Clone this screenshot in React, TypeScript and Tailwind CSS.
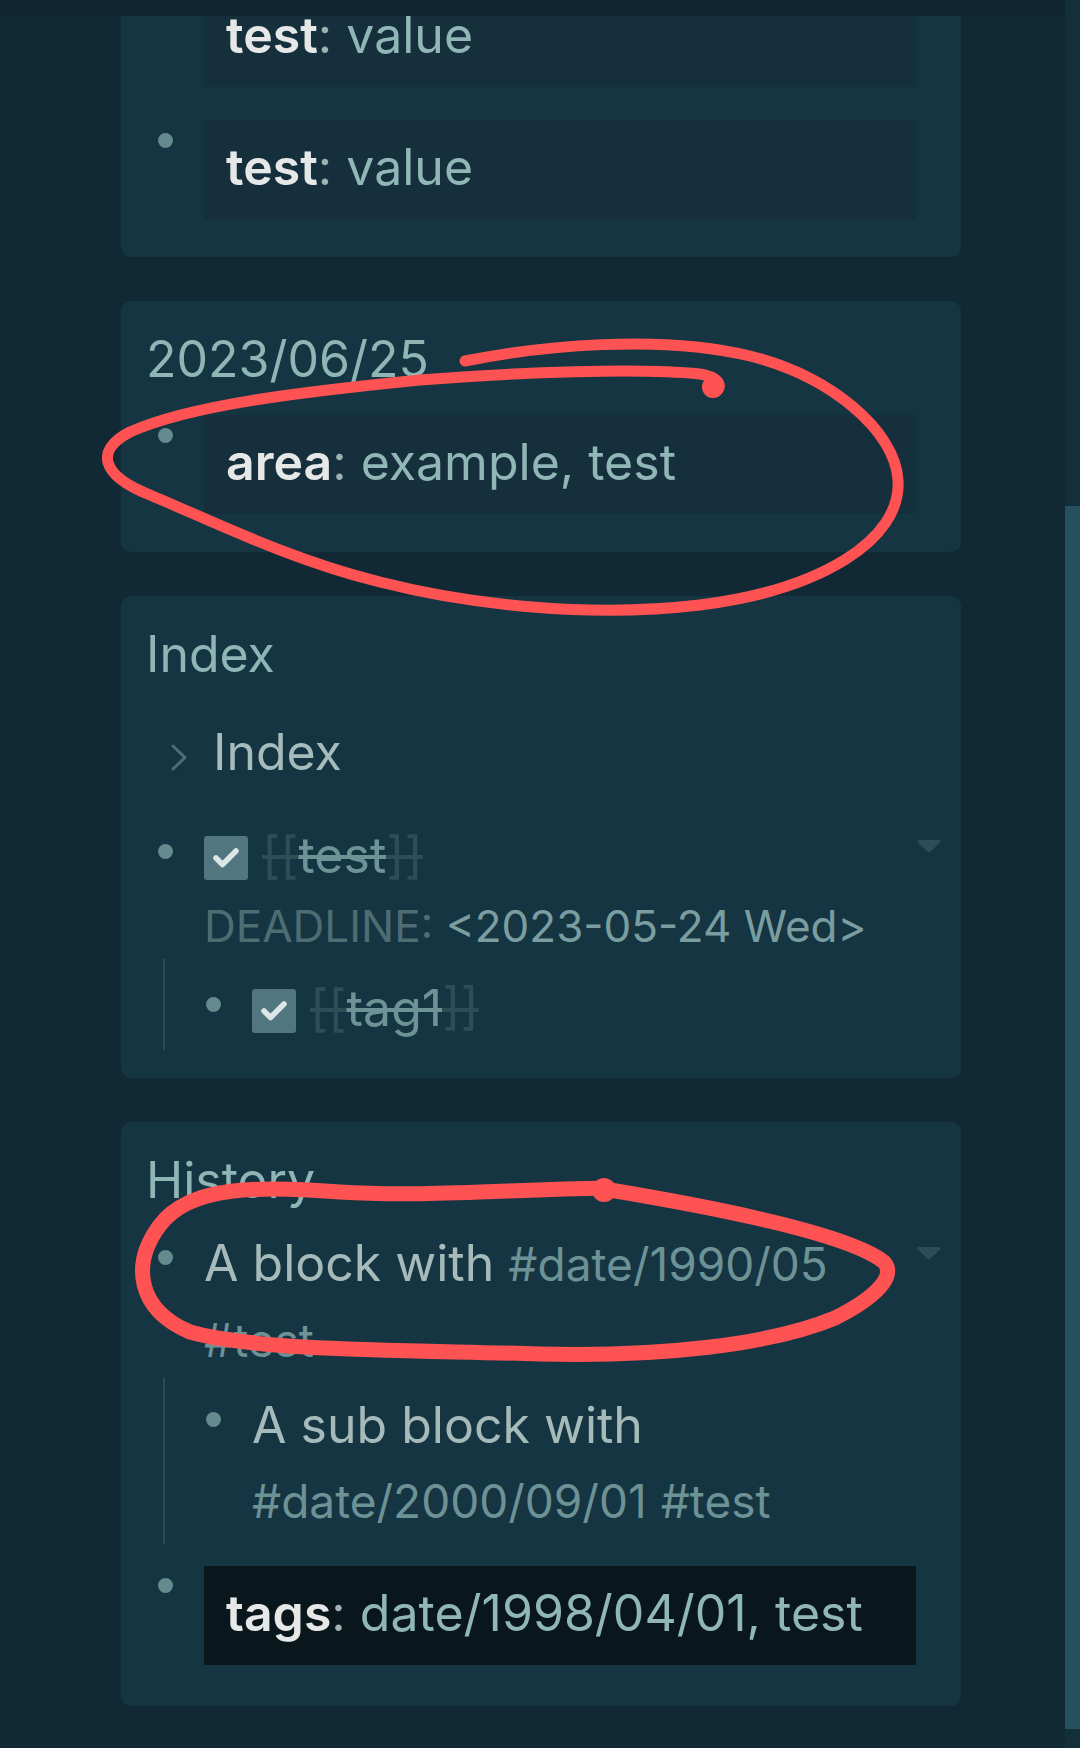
import React from 'react';

const Bullet = ({ className }: { className: string }) => (
  <div className={`w-[58px] shrink-0 pl-[12px] ${className}`}>
    <div className="h-[15px] w-[15px] rounded-full bg-[#668b8e]" />
  </div>
);

const Caret = () => (
  <svg width="26" height="14" viewBox="0 0 26 14">
    <path d="M3 2.5 H23 L13 12 Z" fill="#2d4d58" stroke="#2d4d58" strokeWidth="3" strokeLinejoin="round" />
  </svg>
);

const Checkbox = () => (
  <div className="mt-[18px] h-[44px] w-[44px] shrink-0 rounded-[3px] bg-[#52767f]">
    <svg width="44" height="44" viewBox="0 0 44 44">
      <path d="M12 22 L18.5 28.5 L32 15" fill="none" stroke="#dce6e6" strokeWidth="5.5" strokeLinecap="round" strokeLinejoin="round" />
    </svg>
  </div>
);

const DoneLink = ({ label }: { label: string }) => (
  <span className="ml-[14px] whitespace-nowrap text-[50px] leading-[75px]">
    <span className="text-[#2e4d57] line-through decoration-4">[[</span>
    <span className="text-[#6e9397] line-through decoration-4">{label}</span>
    <span className="text-[#2e4d57] line-through decoration-4">]]</span>
  </span>
);

const Property = ({ name, value, dark }: { name: string; value: string; dark?: boolean }) => (
  <div
    className={`flex-1 pl-[22px] pt-[10px] pb-[14px] text-[50px] leading-[75px] ${
      dark ? 'bg-[#09171d]' : 'bg-[#162f3c]'
    }`}
  >
    <span className="font-semibold text-[#e6e8e8]">{name}</span>
    <span className="text-[#9fb2b2]">: </span>
    <span className="text-[#90b6b6]">{value}</span>
  </div>
);

const Tag = ({ children }: { children: React.ReactNode }) => (
  <span className="text-[46px] text-[#6d9295]">{children}</span>
);

export default function App() {
  return (
    <div className="relative flex h-[1748px] w-[1080px] overflow-hidden bg-[#102935] font-['Inter',sans-serif]">
      <div className="flex flex-1 flex-col">
        <div className="h-[16px] shrink-0 bg-[#10252f]" />

        <div className="flex-1 overflow-hidden">
          <div className="-mt-[28px] flex flex-col gap-[44px] pl-[121px]">
            {/* properties card, top cut off by the header */}
            <div className="w-[840px] rounded-b-[10px] bg-[#153542] pb-[38px] pl-[25px] pr-[20px]">
              <div className="flex">
                <Bullet className="pt-[13px]" />
                <Property name="test" value="value" />
                <div className="w-[25px] shrink-0" />
              </div>
              <div className="mt-[33px] flex">
                <Bullet className="pt-[13px]" />
                <Property name="test" value="value" />
                <div className="w-[25px] shrink-0" />
              </div>
            </div>

            {/* journal day */}
            <div className="w-[840px] rounded-[10px] bg-[#153542] pt-[21px] pb-[38px] pl-[25px] pr-[20px]">
              <div className="text-[50px] leading-[75px] text-[#8fb6b5]">2023/06/25</div>
              <div className="mt-[18px] flex">
                <Bullet className="pt-[13px]" />
                <Property name="area" value="example, test" />
                <div className="w-[25px] shrink-0" />
              </div>
            </div>

            {/* index */}
            <div className="w-[840px] rounded-[10px] bg-[#153542] pt-[21px] pb-[28px] pl-[25px] pr-[20px]">
              <div className="text-[50px] leading-[75px] text-[#8fb6b5]">Index</div>
              <div className="mt-[23px] flex h-[75px] items-center pl-[24px]">
                <svg width="18" height="29" viewBox="0 0 18 29" className="mt-[10px] shrink-0">
                  <path d="M3 3 L15 14.5 L3 26" fill="none" stroke="#4d6e74" strokeWidth="3" strokeLinecap="round" strokeLinejoin="round" />
                </svg>
                <span className="ml-[25px] text-[50px] leading-[75px] text-[#a6bbbb]">Index</span>
              </div>

              <div className="mt-[28px] flex">
                <Bullet className="pt-[26px]" />
                <div className="flex-1">
                  <div className="flex">
                    <Checkbox />
                    <DoneLink label="test" />
                  </div>
                  <div className="text-[44px] leading-[66px]">
                    <span className="text-[#4e6d73]">DEADLINE:</span>{' '}
                    <span className="text-[#7a9ea0]">&lt;2023-05-24 Wed&gt;</span>
                  </div>
                </div>
                <div className="w-[25px] shrink-0 pt-[21px]">
                  <Caret />
                </div>
              </div>

              <div className="ml-[17px] border-l-2 border-[#2b4b56] pl-[29px] pt-[12px] pb-[4px]">
                <div className="flex">
                  <Bullet className="pt-[26px]" />
                  <div className="flex flex-1">
                    <Checkbox />
                    <DoneLink label="tag1" />
                  </div>
                  <div className="w-[25px] shrink-0" />
                </div>
              </div>
            </div>

            {/* history */}
            <div className="w-[840px] rounded-[10px] bg-[#153542] pt-[21px] pb-[41px] pl-[25px] pr-[20px]">
              <div className="text-[50px] leading-[75px] text-[#8fb6b5]">History</div>
              <div className="mt-[8px] flex">
                <Bullet className="pt-[24px]" />
                <div className="flex-1 text-[50px] leading-[75px] text-[#a6baba]">
                  A block with <Tag>#date/1990/05</Tag> <Tag>#test</Tag>
                </div>
                <div className="w-[25px] shrink-0 pt-[20px]">
                  <Caret />
                </div>
              </div>

              <div className="ml-[17px] border-l-2 border-[#2b4b56] pl-[29px] pt-[10px] pb-[5px]">
                <div className="flex">
                  <Bullet className="pt-[24px]" />
                  <div className="flex-1 text-[50px] leading-[75px] text-[#a6baba]">
                    A sub block with <Tag>#date/2000/09/01</Tag> <Tag>#test</Tag>
                  </div>
                  <div className="w-[25px] shrink-0" />
                </div>
              </div>

              <div className="mt-[22px] flex">
                <Bullet className="pt-[12px]" />
                <Property name="tags" value="date/1998/04/01, test" dark />
                <div className="w-[25px] shrink-0" />
              </div>
            </div>
          </div>
        </div>
      </div>

      {/* scrollbar */}
      <div className="flex w-[15px] shrink-0 flex-col bg-[#132f3a]">
        <div className="mt-[506px] h-[1223px] bg-[#26505f]" />
      </div>

      {/* hand-drawn highlights */}
      <svg
        className="pointer-events-none absolute left-0 top-0"
        width="1080"
        height="1748"
        viewBox="0 0 1080 1748"
        fill="none"
      >
        <path
          d="M465 361 C540 346 660 334 750 356 C830 376 895 430 898 480 C902 540 820 590 700 605 C590 618 470 605 380 582 C290 560 210 520 150 495 C100 475 95 450 130 432 C190 405 300 392 420 380 C520 372 640 368 700 374 C725 378 722 392 712 392"
          stroke="#ff5353"
          strokeWidth="11"
          strokeLinecap="round"
          strokeLinejoin="round"
        />
        <circle cx="713" cy="387" r="11" fill="#ff5353" />
        <path
          d="M606 1188 C500 1190 420 1197 340 1192 C260 1186 190 1185 160 1225 C130 1265 138 1310 190 1332 C260 1352 420 1350 540 1354 C660 1357 770 1345 835 1318 C875 1298 897 1276 884 1262 C850 1235 730 1210 610 1190"
          stroke="#ff5353"
          strokeWidth="15"
          strokeLinecap="round"
          strokeLinejoin="round"
        />
        <circle cx="604" cy="1190" r="12" fill="#ff5353" />
      </svg>
    </div>
  );
}
